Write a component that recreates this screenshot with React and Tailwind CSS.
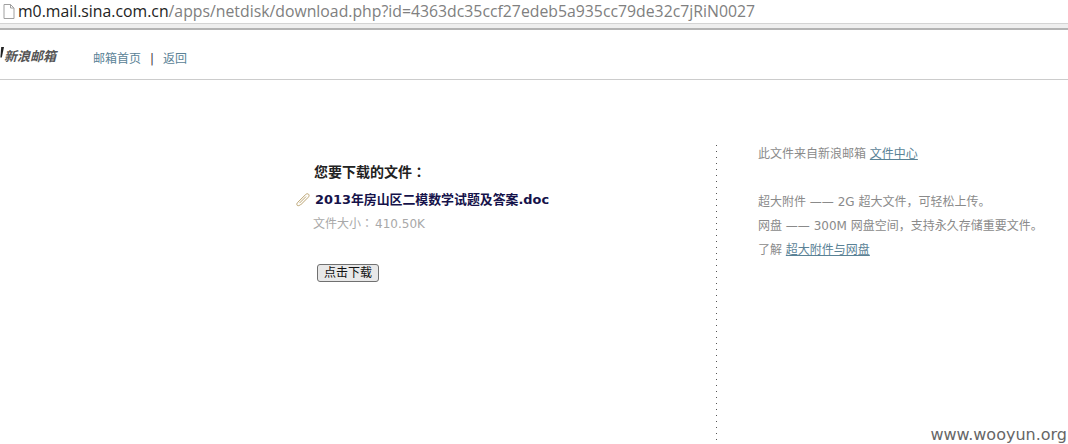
import React from "react";

const CJK = "font-['DejaVu_Sans','Noto_Sans_CJK_SC',sans-serif]";

const PaperclipIcon = () => (
  <svg width="14" height="14" viewBox="0 0 14 14" fill="none" stroke="#b39a62" strokeWidth="0.9" strokeLinecap="round" strokeLinejoin="round">
    <path d="M4.500 12 12.300 4.200c1-1 1-2.300.2-3-.8-.7-2-.5-2.900.4L1.600 9.500c-.8.800-1 2.100-.4 2.800.7.700 1.900.5 2.800-.3" />
    <path d="M3.800 9.800 9.800 3.800" />
  </svg>
);

const FileIcon = () => (
  <svg width="12" height="15" viewBox="0 0 12 15" fill="none" stroke="#a0a0a0" strokeWidth="1">
    <path d="M1 .5h6.500L11 4v10.500H1z" />
    <path d="M7.500.5V4H11" />
  </svg>
);

const LogoMark = () => (
  <svg width="4" height="11" viewBox="0 0 4 11" className="mb-[9px]">
    <path d="M1.200 0H4L1.800 10.500H.4z" fill="#222" />
  </svg>
);

export default function App() {
  return (
    <div className={`relative w-[1068px] h-[444px] overflow-hidden bg-white ${CJK}`}>
      {/* address bar */}
      <div className="h-[23px] flex items-center pl-[3px] gap-[3px] overflow-hidden">
        <FileIcon />
        <span className="font-['Open_Sans',sans-serif] text-[15.8px] leading-[23px] text-[#808080] whitespace-nowrap">
          <span className="text-[#222]">m0.mail.sina.com.cn</span>
          /apps/netdisk/download.php?id=4363dc35ccf27edeb5a935cc79de32c7jRiN0027
        </span>
      </div>
      <div className="h-[7px] bg-[#efefef] border-t border-t-[#d4d4d4] border-b-2 border-b-[#b4b4b4]" />

      {/* page header */}
      <div className="h-[50px] flex items-center border-b border-[#ccc]">
        <div className="w-[93px] flex items-center mt-[4px]">
          <LogoMark />
          <span className="text-[13px] font-bold italic text-[#555]">新浪邮箱</span>
        </div>
        <div className="flex items-center text-[12px] text-[#5a8296] mt-[9px]">
          <span>邮箱首页</span>
          <span className="mx-[9px] text-[#444]">|</span>
          <span>返回</span>
        </div>
      </div>

      {/* content */}
      <div className="flex pt-[65px] h-[361px]">
        <div className="w-[716px] pl-[296px]">
          <div className="pl-[18px] mt-[16px] text-[14px] leading-[20px] font-bold text-[#222]">
            您要下载的文件<span className="font-['Noto_Sans_CJK_TC',sans-serif]">：</span>
          </div>
          <div className="flex items-center mt-[8px] h-[20px]">
            <PaperclipIcon />
            <span className="ml-[5px] text-[12.9px] font-bold text-[#15124a]">2013年房山区二模数学试题及答案.doc</span>
          </div>
          <div className="pl-[17px] mt-[3px] text-[12px] leading-[20px] text-[#a8a8a8]">
            文件大小<span className="font-['Noto_Sans_CJK_TC',sans-serif] mr-[2px]">：</span>410.50K
          </div>
          <button className="block ml-[21px] mt-[30px] w-[62px] h-[18px] rounded-[3px] border border-[#707070] bg-[#e8e8e8] text-[12px] leading-[14px] text-[#111]">
            点击下载
          </button>
        </div>
        <div className="w-px h-[296px] bg-[linear-gradient(#555_1px,transparent_1px)] bg-[length:1px_6px]" />
        <div className="pl-[41px] text-[12px] leading-[24px] text-[#8a8a8a]">
          <div className="-mt-[3px]">
            此文件来自新浪邮箱 <span className="underline text-[#5a8296]">文件中心</span>
          </div>
          <div className="mt-[24px]">超大附件 —— 2G 超大文件，可轻松上传。</div>
          <div>网盘 —— 300M 网盘空间，支持永久存储重要文件。</div>
          <div>
            了解 <span className="underline text-[#5a8296]">超大附件与网盘</span>
          </div>
        </div>
      </div>

      <span className="absolute right-[1px] bottom-[-3px] text-[16px] text-[#666]">www.wooyun.org</span>
    </div>
  );
}
